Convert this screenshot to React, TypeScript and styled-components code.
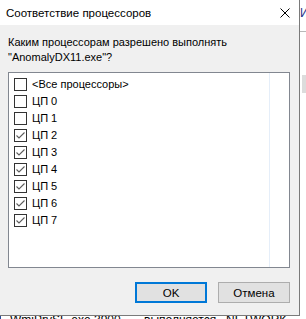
import { useState } from 'react';
import styled, { createGlobalStyle } from 'styled-components';

const GlobalStyle = createGlobalStyle`
    body {
        margin: 0;
        background: #ffffff;
        font-family: 'Liberation Sans', Arial, sans-serif;
        font-size: 11px;
        color: #000000;
    }
`;

const Desktop = styled.div`
    position: relative;
    width: 306px;
    height: 319px;
    overflow: hidden;
    background: #ffffff;
`;

// task manager window behind the dialog //
const BgWindow = styled.div`
    position: absolute;
    inset: 0;
    display: flex;
    flex-direction: column;
    font-size: 12px;
`;
const BgHeader = styled.div`
    height: 32px;
    box-sizing: border-box;
    border-bottom: 1px solid #b8b8b8;
    padding: 6px 0 0 300px;
    color: #1e3287;
    white-space: nowrap;
`;
const BgSelected = styled.div`
    margin: 43px 0 0 302px;
    height: 18px;
    background: #dcdcdc;
`;
const BgSpacer = styled.div`
    flex: 1;
`;
const BgRow = styled.div`
    display: flex;
    height: 20px;
    line-height: 15px;
    margin-bottom: -14px;
    white-space: nowrap;
    color: #000;
`;
const BgIcon = styled.div`
    width: 4px;
    height: 12px;
    margin: 3px 9px 0 0;
    background: #2a4a9a;
`;
const BgCell = styled.span<{ $w: number }>`
    width: ${(p) => p.$w}px;
    flex: none;
    overflow: hidden;
`;

// dialog //
const Dialog = styled.div`
    position: absolute;
    left: 0;
    top: 0;
    width: 300px;
    height: 316px;
    box-sizing: border-box;
    border-right: 1px solid #7a7a7a;
    border-bottom: 1px solid #7a7a7a;
    background: #f0f0f0;
    display: flex;
    flex-direction: column;
`;
const TitleBar = styled.div`
    height: 25px;
    flex: none;
    background: #ffffff;
    display: flex;
    align-items: center;
    padding: 0 9px 0 6px;
    font-size: 11.5px;
    span {
        flex: 1;
    }
`;
const Body = styled.div`
    flex: 1;
    display: flex;
    flex-direction: column;
    padding: 10px 9px 0 8px;
`;
const Prompt = styled.div`
    line-height: 15px;
    margin-bottom: 7px;
`;
const ListBox = styled.div`
    height: 196px;
    box-sizing: border-box;
    border: 1px solid #828790;
    background: #ffffff;
    display: flex;
`;
const ListColumn = styled.div`
    width: 261px;
    border-right: 1px solid #e5eef9;
    padding: 3px 0 0 5px;
    box-sizing: border-box;
`;
const Row = styled.label`
    display: flex;
    align-items: center;
    height: 17px;
    gap: 5px;
    cursor: default;
    span {
        line-height: 15px;
    }
`;
const Box = styled.div`
    width: 13px;
    height: 13px;
    box-sizing: border-box;
    border: 1px solid #333333;
    background: #ffffff;
    display: flex;
    align-items: center;
    justify-content: center;
    flex: none;
`;
const Buttons = styled.div`
    display: flex;
    justify-content: flex-end;
    gap: 11px;
    margin-top: 14px;
`;
const Button = styled.button<{ $primary?: boolean }>`
    width: 72px;
    height: 21px;
    box-sizing: border-box;
    border: ${(p) => (p.$primary ? '2px solid #0078d7' : '1px solid #adadad')};
    background: #e1e1e1;
    font-family: inherit;
    font-size: 11.5px;
    color: #000;
    padding: 0;
`;

const CheckMark = () => (
    <svg width='11' height='11' viewBox='0 0 11 11'>
        <path d='M1.5 5.5 L4 8 L9.5 2.5' fill='none' stroke='#5c5c5c' strokeWidth='1.1' />
    </svg>
);

const CloseIcon = () => (
    <svg width='10' height='10' viewBox='0 0 10 10'>
        <path d='M0.5 0.5 L9.5 9.5 M9.5 0.5 L0.5 9.5' stroke='#000' strokeWidth='1' />
    </svg>
);

const App = () => {
    const [cpus, setCpus] = useState<boolean[]>([false, false, true, true, true, true, true, true]);
    const all = cpus.every(Boolean);

    const toggle = (i: number) => {
        setCpus(cpus.map((c, j) => (j === i ? !c : c)));
    };

    return (
        <Desktop>
            <GlobalStyle />
            <BgWindow>
                <BgHeader>Имя</BgHeader>
                <BgSelected />
                <BgSpacer />
                <BgRow>
                    <BgIcon />
                    <BgCell $w={84}>WmiPrvSE.exe</BgCell>
                    <BgCell $w={50}>3900</BgCell>
                    <BgCell $w={82}>выполняется</BgCell>
                    <BgCell $w={80}>NETWORK...</BgCell>
                </BgRow>
            </BgWindow>
            <Dialog>
                <TitleBar>
                    <span>Соответствие процессоров</span>
                    <CloseIcon />
                </TitleBar>
                <Body>
                    <Prompt>
                        Каким процессорам разрешено выполнять
                        <br />
                        "AnomalyDX11.exe"?
                    </Prompt>
                    <ListBox>
                        <ListColumn>
                            <Row onClick={() => setCpus(cpus.map(() => !all))}>
                                <Box>{all && <CheckMark />}</Box>
                                <span>&lt;Все процессоры&gt;</span>
                            </Row>
                            {cpus.map((on, i) => (
                                <Row key={i} onClick={() => toggle(i)}>
                                    <Box>{on && <CheckMark />}</Box>
                                    <span>ЦП {i}</span>
                                </Row>
                            ))}
                        </ListColumn>
                    </ListBox>
                    <Buttons>
                        <Button $primary>OK</Button>
                        <Button>Отмена</Button>
                    </Buttons>
                </Body>
            </Dialog>
        </Desktop>
    );
};
export default App;
